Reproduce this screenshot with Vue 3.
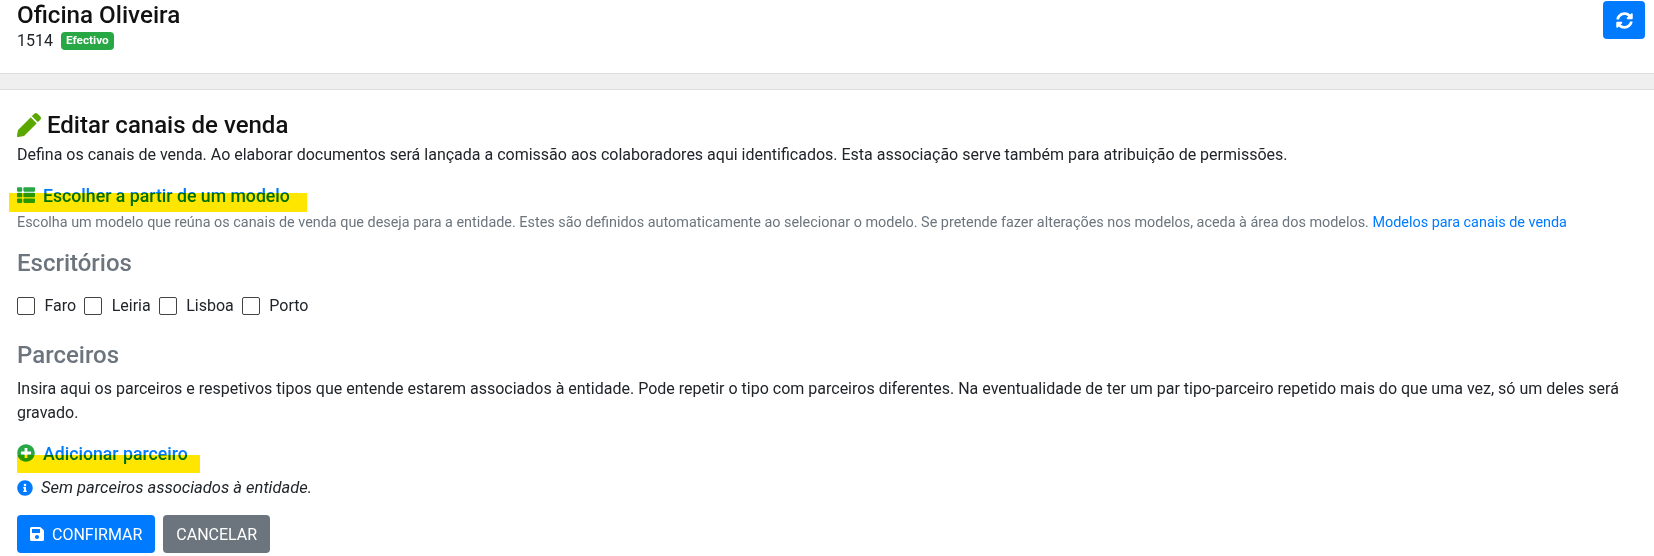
<script setup>
const offices = ['Faro', 'Leiria', 'Lisboa', 'Porto']
</script>

<template>
  <div class="page">
    <header class="top">
      <div>
        <div class="name">Oficina Oliveira</div>
        <div class="sub"><span>1514</span><span class="badge">Efectivo</span></div>
      </div>
      <button class="refresh" type="button" aria-label="Atualizar">
        <svg viewBox="0 0 512 512" width="17" height="17"><path fill="#fff" d="M370.72 133.28C339.458 104.008 298.888 87.962 255.848 88c-77.458.068-144.328 53.178-162.791 126.85-1.344 5.363-6.122 9.15-11.651 9.15H24.103c-7.498 0-13.194-6.807-11.807-14.176C33.933 94.924 134.813 8 256 8c66.448 0 126.791 26.136 171.315 68.685L463.030 40.970C478.149 25.851 504 36.559 504 57.941V192c0 13.255-10.745 24-24 24H345.941c-21.382 0-32.090-25.851-16.971-40.971l41.750-41.749zM32 296h134.059c21.382 0 32.090 25.851 16.971 40.971l-41.750 41.750c31.262 29.273 71.835 45.319 114.876 45.280 77.418-.070 144.315-53.144 162.787-126.849 1.344-5.363 6.122-9.150 11.651-9.150h57.304c7.498 0 13.194 6.807 11.807 14.176C478.067 417.076 377.187 504 256 504c-66.448 0-126.791-26.136-171.315-68.685L48.970 471.030C33.851 486.149 8 475.441 8 454.059V320c0-13.255 10.745-24 24-24z"/></svg>
      </button>
    </header>
    <div class="band"></div>
    <main class="content">
      <h1 class="title">
        <svg class="pencil" viewBox="0 0 512 512" width="24" height="24"><path fill="#5aa700" d="M497.9 142.1l-46.1 46.1c-4.7 4.7-12.3 4.7-17 0l-111-111c-4.7-4.7-4.7-12.3 0-17l46.1-46.1c18.7-18.7 49.1-18.7 67.9 0l60.1 60.1c18.8 18.7 18.8 49.1 0 67.9zM284.2 99.8L21.6 362.4.4 483.9c-2.9 16.4 11.4 30.6 27.8 27.8l121.5-21.3 262.6-262.6c4.7-4.7 4.7-12.3 0-17l-111-111c-4.8-4.7-12.4-4.7-17.1 0z"/></svg>
        Editar canais de venda
      </h1>
      <p class="lead">Defina os canais de venda. Ao elaborar documentos será lançada a comissão aos colaboradores aqui identificados. Esta associação serve também para atribuição de permissões.</p>

      <div class="action model">
        <svg viewBox="0 0 512 512" width="18" height="18"><path fill="#28a745" d="M149.333 216v80c0 13.255-10.745 24-24 24H24c-13.255 0-24-10.745-24-24v-80c0-13.255 10.745-24 24-24h101.333c13.255 0 24 10.745 24 24zM0 376v80c0 13.255 10.745 24 24 24h101.333c13.255 0 24-10.745 24-24v-80c0-13.255-10.745-24-24-24H24c-13.255 0-24 10.745-24 24zM125.333 32H24C10.745 32 0 42.745 0 56v80c0 13.255 10.745 24 24 24h101.333c13.255 0 24-10.745 24-24V56c0-13.255-10.745-24-24-24zm80 448H488c13.255 0 24-10.745 24-24v-80c0-13.255-10.745-24-24-24H205.333c-13.255 0-24 10.745-24 24v80c0 13.255 10.745 24 24 24zm-24-424v80c0 13.255 10.745 24 24 24H488c13.255 0 24-10.745 24-24V56c0-13.255-10.745-24-24-24H205.333c-13.255 0-24 10.745-24 24zm24 264H488c13.255 0 24-10.745 24-24v-80c0-13.255-10.745-24-24-24H205.333c-13.255 0-24 10.745-24 24v80c0 13.255 10.745 24 24 24z"/></svg>
        <span>Escolher a partir de um modelo</span>
        <i class="mark mark-model"></i>
      </div>
      <p class="help">Escolha um modelo que reúna os canais de venda que deseja para a entidade. Estes são definidos automaticamente ao selecionar o modelo. Se pretende fazer alterações nos modelos, aceda à área dos modelos. <a>Modelos para canais de venda</a></p>

      <h2 class="section">Escritórios</h2>
      <div class="checks">
        <label v-for="o in offices" :key="o" class="check"><i class="box"></i>{{ o }}</label>
      </div>

      <h2 class="section second">Parceiros</h2>
      <p class="lead partners">Insira aqui os parceiros e respetivos tipos que entende estarem associados à entidade. Pode repetir o tipo com parceiros diferentes. Na eventualidade de ter um par tipo-parceiro repetido mais do que uma vez, só um deles será gravado.</p>

      <div class="action add">
        <svg viewBox="0 0 512 512" width="18" height="18"><path fill="#28a745" d="M256 8C119 8 8 119 8 256s111 248 248 248 248-111 248-248S393 8 256 8zm144 276c0 6.6-5.4 12-12 12h-92v92c0 6.6-5.4 12-12 12h-56c-6.6 0-12-5.400-12-12v-92h-92c-6.600 0-12-5.400-12-12v-56c0-6.600 5.400-12 12-12h92v-92c0-6.600 5.400-12 12-12h56c6.600 0 12 5.400 12 12v92h92c6.600 0 12 5.400 12 12v56z"/></svg>
        <span>Adicionar parceiro</span>
        <i class="mark mark-add"></i>
      </div>
      <div class="empty">
        <svg viewBox="0 0 512 512" width="16" height="16"><path fill="#007bff" d="M256 8C119.043 8 8 119.083 8 256c0 136.997 111.043 248 248 248s248-111.003 248-248C504 119.083 392.957 8 256 8zm0 110c23.196 0 42 18.804 42 42s-18.804 42-42 42-42-18.804-42-42 18.804-42 42-42zm56 254c0 6.627-5.373 12-12 12h-88c-6.627 0-12-5.373-12-12v-24c0-6.627 5.373-12 12-12h12v-64h-12c-6.627 0-12-5.373-12-12v-24c0-6.627 5.373-12 12-12h64c6.627 0 12 5.373 12 12v100h12c6.627 0 12 5.373 12 12v24z"/></svg>
        <em>Sem parceiros associados à entidade.</em>
      </div>
      <div class="buttons">
        <button class="btn primary" type="button">
          <svg viewBox="0 0 448 512" width="14" height="16"><path fill="#fff" d="M433.941 129.941l-83.882-83.882A48 48 0 0 0 316.118 32H48C21.490 32 0 53.490 0 80v352c0 26.510 21.490 48 48 48h352c26.510 0 48-21.490 48-48V163.882a48 48 0 0 0-14.059-33.941zM224 416c-35.346 0-64-28.654-64-64 0-35.346 28.654-64 64-64s64 28.654 64 64c0 35.346-28.654 64-64 64zm96-304.520V212c0 6.627-5.373 12-12 12H76c-6.627 0-12-5.373-12-12V108c0-6.627 5.373-12 12-12h228.520c3.183 0 6.235 1.264 8.485 3.515l3.480 3.480A11.996 11.996 0 0 1 320 111.480z"/></svg>
          CONFIRMAR
        </button>
        <button class="btn secondary" type="button">CANCELAR</button>
      </div>
    </main>
  </div>
</template>

<style>
html, body { margin: 0; background: #fff; }
</style>

<style scoped>
.page { width: 1654px; height: 556px; overflow: hidden; font-family: Roboto, sans-serif; font-size: 16px; line-height: 24px; color: #212529; background: #fff; }
.top { height: 73px; box-sizing: border-box; padding: 1px 9px 0 17px; display: flex; justify-content: space-between; align-items: flex-start; }
.name { font-size: 24.2px; font-weight: 500; line-height: 29px; color: #111; }
.sub { display: flex; align-items: center; gap: 8px; font-size: 16px; line-height: 22px; color: #212529; }
.badge { background: #28a745; color: #fff; font-size: 11.8px; font-weight: 700; line-height: 1; padding: 3px 5px; border-radius: 4px; }
.refresh { width: 42px; height: 38px; background: #007bff; border: 0; border-radius: 4px; display: flex; align-items: center; justify-content: center; padding: 0; }
.band { height: 15px; background: #efefef; border-top: 1px solid #dedede; border-bottom: 1px solid #dedede; }
.content { padding: 17px 17px 0; }
.title { display: flex; align-items: center; gap: 6px; margin: 0; font-size: 24px; font-weight: 500; line-height: 36px; color: #111; }
.lead { margin: 0; line-height: 24px; color: #212529; }
.action { position: relative; display: flex; align-items: center; gap: 8px; font-size: 17.7px; font-weight: 500; color: #007bff; line-height: 24px; margin-top: 17px; }
.action svg { margin-bottom: 2px; }
.mark { position: absolute; background: #ffe600; mix-blend-mode: multiply; }
.mark-model { left: -8px; top: 9px; width: 298px; height: 19px; }
.mark-add { left: 0; top: 13px; width: 183px; height: 18px; }
.help { margin: 4px 0 0; font-size: 14.4px; line-height: 22px; color: #6c757d; }
.help a { color: #007bff; }
.section { margin: 15px 0 0; font-size: 24px; font-weight: 500; line-height: 29px; color: #6c757d; }
.section.second { margin-top: 23px; }
.checks { display: flex; gap: 8px; margin-top: 16px; height: 24px; align-items: center; }
.check { display: flex; align-items: center; gap: 9.5px; }
.box { width: 18px; height: 18px; box-sizing: border-box; border: 1.5px solid #444; border-radius: 2px; background: #fff; }
.partners { margin-top: 7px; }
.add { margin-top: 17px; }
.empty { display: flex; align-items: center; gap: 8px; margin-top: 10px; color: #212529; }
.empty em { font-size: 16.5px; }
.buttons { display: flex; gap: 8px; margin-top: 15px; }
.btn { height: 38px; border: 0; border-radius: 4px; color: #fff; font-family: Roboto, sans-serif; font-size: 16px; padding: 0 13px; display: flex; align-items: center; gap: 8px; }
.primary { background: #007bff; }
.secondary { background: #6c757d; }
</style>
